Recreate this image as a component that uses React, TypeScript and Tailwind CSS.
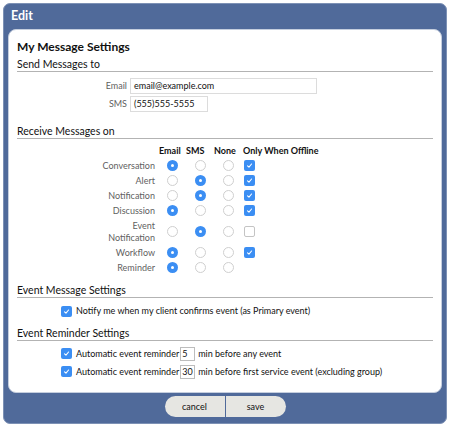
import React from "react";

type Choice = "email" | "sms" | "none";

interface ReceiveRow {
  label: React.ReactNode;
  choice: Choice;
  offline: boolean | null;
  tall?: boolean;
}

const rows: ReceiveRow[] = [
  { label: "Conversation", choice: "email", offline: true },
  { label: "Alert", choice: "sms", offline: true },
  { label: "Notification", choice: "sms", offline: true },
  { label: "Discussion", choice: "email", offline: true },
  {
    label: (
      <>
        Event
        <br />
        Notification
      </>
    ),
    choice: "sms",
    offline: false,
    tall: true,
  },
  { label: "Workflow", choice: "email", offline: true },
  { label: "Reminder", choice: "email", offline: null },
];

function Radio({ on }: { on: boolean }) {
  return on ? (
    <span className="flex h-[11px] w-[11px] items-center justify-center rounded-full bg-[#3b8ef3]">
      <span className="h-[3px] w-[3px] rounded-full bg-white" />
    </span>
  ) : (
    <span className="h-[11px] w-[11px] rounded-full border border-[#cfcfcf] bg-white" />
  );
}

function Check({ on }: { on: boolean }) {
  return on ? (
    <span className="flex h-[11px] w-[11px] items-center justify-center rounded-[2px] bg-[#3b8ef3]">
      <svg viewBox="0 0 10 10" className="h-[9px] w-[9px]" fill="none">
        <path d="M2.8 5.3 4.4 6.8 7.3 3.3" stroke="white" strokeWidth="1.2" strokeLinecap="round" strokeLinejoin="round" />
      </svg>
    </span>
  ) : (
    <span className="h-[11px] w-[11px] rounded-[2px] border border-[#c4c4c4] bg-white" />
  );
}

function SectionHeading({ children, className = "" }: { children: React.ReactNode; className?: string }) {
  return (
    <div className={`mr-[8px] border-b border-[#b3b3b3] text-[10.5px] leading-[14px] text-[#111] ${className}`}>
      {children}
    </div>
  );
}

export default function App() {
  return (
    <div className="h-[428px] w-[450px] bg-white p-[3px] font-['Lato','Liberation_Sans',sans-serif]">
      <div className="flex h-[421px] flex-col rounded-[7px] border border-[#7d91b5] bg-[#506a9a] px-[4px]">
        <div className="h-[25px] pl-[3px] pt-[3px] text-[12.5px] font-bold leading-[18px] text-white">Edit</div>

        <div className="h-[364px] rounded-[8px] border border-[#c5cede] bg-white pl-[8px] pt-[8px]">
          <h1 className="text-[12px] font-bold leading-[18px] text-[#111]">My Message Settings</h1>

          <SectionHeading className="mt-[1px]">Send Messages to</SectionHeading>

          <div className="mt-[6px] flex flex-col gap-[2px] text-[9px]">
            <div className="flex items-center">
              <span className="w-[113px] pr-[3px] text-right text-[#5f5f5f]">Email</span>
              <span className="flex h-[16px] w-[187px] items-center border border-[#dcdcdc] pl-[3px] text-[#111]">
                email@example.com
              </span>
            </div>
            <div className="flex items-center">
              <span className="w-[113px] pr-[3px] text-right text-[#5f5f5f]">SMS</span>
              <span className="flex h-[16px] w-[78px] items-center border border-[#dcdcdc] pl-[3px] text-[#111]">
                (555)555-5555
              </span>
            </div>
          </div>

          <SectionHeading className="mt-[12px]">Receive Messages on</SectionHeading>

          <div className="mt-[5px] grid grid-cols-[141px_28px_28px_29px_auto] text-[9px] leading-[12px]">
            <span className="h-[14px]" />
            <span className="flex h-[14px] items-center pl-[1px] font-bold text-[#111]">Email</span>
            <span className="flex h-[14px] items-center font-bold text-[#111]">SMS</span>
            <span className="flex h-[14px] items-center font-bold text-[#111]">None</span>
            <span className="flex h-[14px] items-center font-bold text-[#111]">Only When Offline</span>

            {rows.map((row, i) => {
              const h = row.tall ? "h-[27px]" : "h-[15px]";
              return (
                <React.Fragment key={i}>
                  <span className={`${h} flex items-center justify-end pr-[3px] text-right text-[#5f5f5f]`}>
                    <span>{row.label}</span>
                  </span>
                  <span className={`${h} flex items-center justify-center pl-[1px]`}>
                    <Radio on={row.choice === "email"} />
                  </span>
                  <span className={`${h} flex items-center justify-center pl-[1px]`}>
                    <Radio on={row.choice === "sms"} />
                  </span>
                  <span className={`${h} flex items-center justify-center`}>
                    <Radio on={row.choice === "none"} />
                  </span>
                  <span className={`${h} flex items-center pl-[1px]`}>
                    {row.offline !== null && <Check on={row.offline} />}
                  </span>
                </React.Fragment>
              );
            })}
          </div>

          <SectionHeading className="mt-[8px]">Event Message Settings</SectionHeading>

          <div className="mt-[6px] flex h-[14px] items-center gap-[4px] pl-[44px] text-[9px] text-[#111]">
            <Check on />
            <span>Notify me when my client confirms event (as Primary event)</span>
          </div>

          <SectionHeading className="mt-[8px]">Event Reminder Settings</SectionHeading>

          <div className="mt-[5px] flex flex-col gap-[3px] pl-[44px] text-[9px] text-[#111]">
            <div className="flex h-[15px] items-center gap-[4px]">
              <Check on />
              <span className="flex items-center">
                Automatic event reminder
                <span className="ml-[1px] mr-[3px] flex h-[14px] w-[15px] items-center border border-[#bdbdbd] pl-[1px]">5</span>
                min before any event
              </span>
            </div>
            <div className="flex h-[15px] items-center gap-[4px]">
              <Check on />
              <span className="flex items-center">
                Automatic event reminder
                <span className="ml-[1px] mr-[3px] flex h-[14px] w-[15px] items-center border border-[#bdbdbd] pl-[1px]">30</span>
                min before first service event (excluding group)
              </span>
            </div>
          </div>
        </div>

        <div className="mt-[3px] flex justify-center">
          <div className="flex h-[21px] overflow-hidden rounded-full bg-[#e6e6e2] text-[9px] text-[#111]">
            <button className="w-[61px] border-r border-[#506a9a]">cancel</button>
            <button className="w-[60px]">save</button>
          </div>
        </div>
      </div>
    </div>
  );
}
